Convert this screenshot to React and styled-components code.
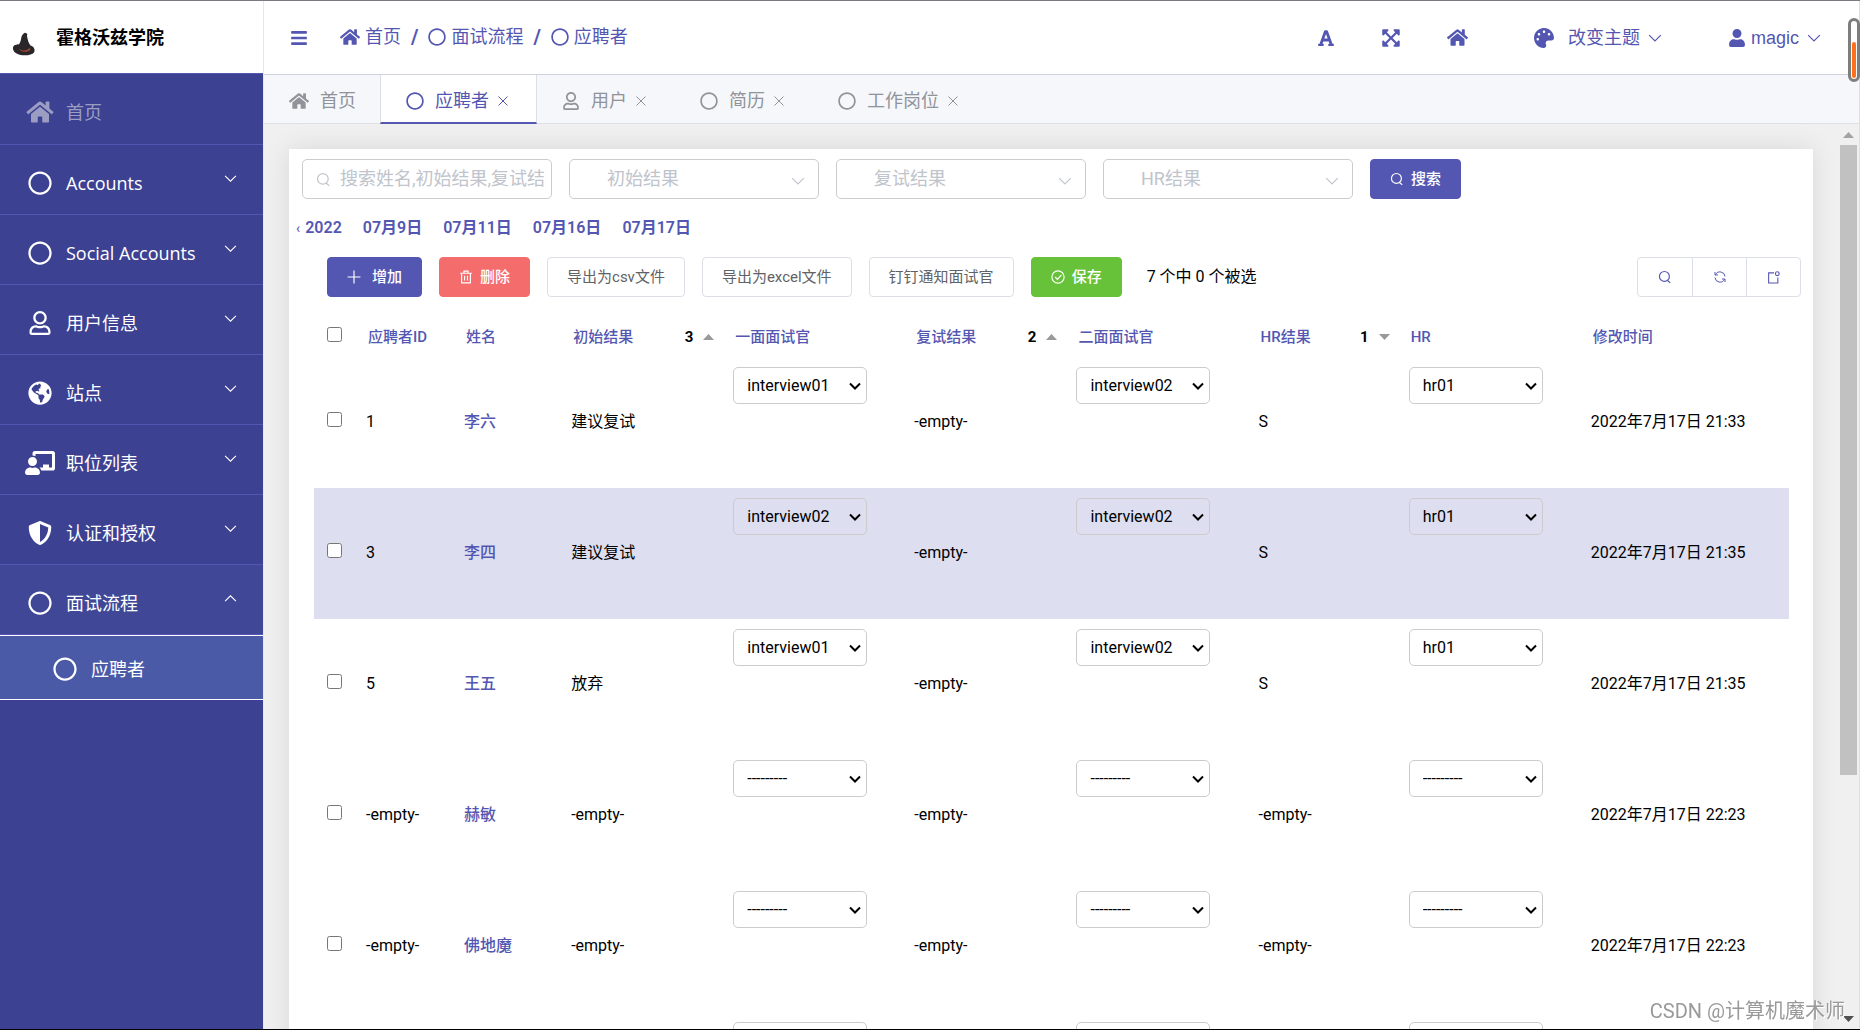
import React from 'react';
import styled, { createGlobalStyle, css } from 'styled-components';
import {
  FaBars, FaChalkboardTeacher, FaExpandArrowsAlt, FaFont, FaGlobeAmericas, FaHome,
  FaPalette, FaRegCircle, FaRegUser, FaShieldAlt, FaUser,
} from 'react-icons/fa';

const COLORS = {
  primary: '#5457b2',
  sidebar: '#3d4192',
  sidebarOpen: '#404797',
  sidebarActive: '#4b5aa7',
  danger: '#f56c6c',
  success: '#67c23a',
  border: '#dcdfe6',
  inputBorder: '#cccccc',
  muted: '#909399',
  placeholder: '#c0c4cc',
  text: '#606266',
  selectedRow: '#dddef0',
};

const CJK = '"Noto Sans CJK SC", sans-serif';

const MENU = [
  { label: '首页', icon: FaHome, home: true },
  { label: 'Accounts', icon: FaRegCircle },
  { label: 'Social Accounts', icon: FaRegCircle },
  { label: '用户信息', icon: FaRegUser },
  { label: '站点', icon: FaGlobeAmericas },
  { label: '职位列表', icon: FaChalkboardTeacher },
  { label: '认证和授权', icon: FaShieldAlt },
  { label: '面试流程', icon: FaRegCircle, children: [{ label: '应聘者', icon: FaRegCircle }] },
];

const TABS = [
  { label: '首页', icon: FaHome, fixed: true },
  { label: '应聘者', icon: FaRegCircle, active: true },
  { label: '用户', icon: FaRegUser },
  { label: '简历', icon: FaRegCircle },
  { label: '工作岗位', icon: FaRegCircle },
];

const DATES = ['07月9日', '07月11日', '07月16日', '07月17日'];

const COLUMNS = [
  { label: '应聘者ID', width: 98 },
  { label: '姓名', width: 107 },
  { label: '初始结果', width: 162, order: 3, dir: 'asc' },
  { label: '一面面试官', width: 181 },
  { label: '复试结果', width: 162, order: 2, dir: 'asc' },
  { label: '二面面试官', width: 182 },
  { label: 'HR结果', width: 150, order: 1, dir: 'desc' },
  { label: 'HR', width: 182 },
  { label: '修改时间', width: 208 },
];

const EMPTY = '-empty-';
const NONE = '---------';

const ROWS = [
  { id: '1', name: '李六', first: '建议复试', second: EMPTY, one: 'interview01', two: 'interview02', hrResult: 'S', hr: 'hr01', time: '2022年7月17日 21:33' },
  { id: '3', name: '李四', first: '建议复试', second: EMPTY, one: 'interview02', two: 'interview02', hrResult: 'S', hr: 'hr01', time: '2022年7月17日 21:35', selected: true },
  { id: '5', name: '王五', first: '放弃', second: EMPTY, one: 'interview01', two: 'interview02', hrResult: 'S', hr: 'hr01', time: '2022年7月17日 21:35' },
  { id: EMPTY, name: '赫敏', first: EMPTY, second: EMPTY, one: NONE, two: NONE, hrResult: EMPTY, hr: NONE, time: '2022年7月17日 22:23' },
  { id: EMPTY, name: '佛地魔', first: EMPTY, second: EMPTY, one: NONE, two: NONE, hrResult: EMPTY, hr: NONE, time: '2022年7月17日 22:23' },
  { one: '', two: '', hr: '' },
];

const INTERVIEWERS = [NONE, 'interview01', 'interview02'];
const HRS = [NONE, 'hr01'];

const PATHS = {
  search: 'M11 2.5a8.5 8.5 0 1 0 0 17a8.5 8.5 0 1 0 0 -17M16.5 18l4.5 4',
  down: 'M2 7l10 10L22 7',
  up: 'M2 17L12 7l10 10',
  close: 'M3 3l18 18M21 3L3 21',
  plus: 'M12 1v22M1 12h22',
  trash: 'M2 5.5h20M8.5 5V2h7v3M4.5 5.5V22h15V5.5M9.5 10v8M14.5 10v8',
  check: 'M12 1.5a10.5 10.5 0 1 0 0 21a10.5 10.5 0 1 0 0 -21M7 12l4 4l7 -7.5',
  refresh: 'M2 2v6h6M3 7.5A10 10 0 0 1 22 11M22 22v-6h-6M21 16.5A10 10 0 0 1 2 13',
  popup: 'M13 3.5H3V22h17V12M19 1.5a3.5 3.5 0 1 0 0 7a3.5 3.5 0 1 0 0 -7',
};

const LineIcon = ({ name, size = 14, weight = 2 }) => (
  <svg width={size} height={size} viewBox="0 0 24 24" fill="none" stroke="currentColor" strokeWidth={weight} aria-hidden="true">
    <path d={PATHS[name]} />
  </svg>
);

const Hat = () => (
  <svg width="24" height="24" viewBox="0 0 24 24" aria-hidden="true">
    <path d="M12.5 1C13.5 0.5 15 1.5 15.5 3C14.8 2.8 14.8 3.5 15.2 5C15.8 8 16.5 11 18.5 13.5C22 14.5 23.5 17.5 22 20.5C19.5 24 8 24.5 3 20.5C0 17.5 0.5 14 3 13C4.5 12.5 6 12.8 7.2 12C9.5 8.5 9 5 10 3.5C10.8 2.2 11.5 1.5 12.5 1Z" fill="#2b2629" />
    <path d="M6.5 16.5C10 19.5 15 19 18 15.5L18.2 18C15 20.8 9 20.5 6.5 16.5Z" fill="#9c4430" />
  </svg>
);

const SortArrow = ({ dir }) => (
  <svg width="11" height="6" viewBox="0 0 11 6" aria-hidden="true">
    <path d={dir === 'asc' ? 'M0 6L5.5 0L11 6Z' : 'M0 0L5.5 6L11 0Z'} fill="currentColor" />
  </svg>
);

const CellSelect = ({ label, value, options }) => (
  <SelectBox>
    <RowSelect aria-label={label} defaultValue={value}>
      {!value && <option value="" aria-label="未选择" />}
      {options.map((option) => <option key={option}>{option}</option>)}
    </RowSelect>
    <SelectArrow><LineIcon name="down" size={12} weight={4} /></SelectArrow>
  </SelectBox>
);

const Filter = ({ label }) => (
  <FilterBox>
    <FilterSelect aria-label={label} defaultValue="">
      <option value="">{label}</option>
    </FilterSelect>
    <FilterArrow><LineIcon name="down" size={14} /></FilterArrow>
  </FilterBox>
);

const Sidebar = () => (
  <Side>
    <Logo>
      <Hat />
      <LogoTitle>霍格沃兹学院</LogoTitle>
    </Logo>
    <Menu>
      {MENU.map(({ label, icon: Icon, home, children }) => (
        <React.Fragment key={label}>
          <MenuItem type="button" $home={home} $open={Boolean(children)}>
            <MenuIcon as={Icon} />
            <MenuLabel>{label}</MenuLabel>
            {!home && <MenuArrow><LineIcon name={children ? 'up' : 'down'} size={13} /></MenuArrow>}
          </MenuItem>
          {children && children.map((child) => (
            <SubItem key={child.label} href="#candidates">
              <MenuIcon as={child.icon} />
              <MenuLabel>{child.label}</MenuLabel>
            </SubItem>
          ))}
        </React.Fragment>
      ))}
    </Menu>
  </Side>
);

const Header = () => (
  <TopBar>
    <IconButton type="button" aria-label="菜单"><FaBars size={18} /></IconButton>
    <Breadcrumb>
      <Crumb href="#home"><FaHome size={20} />首页</Crumb>
      <Slash>/</Slash>
      <Crumb href="#flow"><FaRegCircle />面试流程</Crumb>
      <Slash>/</Slash>
      <Crumb href="#candidates"><FaRegCircle />应聘者</Crumb>
    </Breadcrumb>
    <TopTools>
      <IconButton type="button" aria-label="字体"><FaFont size={18} /></IconButton>
      <IconButton type="button" aria-label="全屏"><FaExpandArrowsAlt size={20} /></IconButton>
      <IconButton type="button" aria-label="首页"><FaHome size={21} /></IconButton>
    </TopTools>
    <DropButton type="button">
      <FaPalette size={20} />
      <DropLabel $gap={14}>改变主题</DropLabel>
      <LineIcon name="down" />
    </DropButton>
    <DropButton type="button">
      <FaUser size={18} />
      <DropLabel $gap={5}>magic</DropLabel>
      <LineIcon name="down" />
    </DropButton>
  </TopBar>
);

const Tabs = () => (
  <TabBar>
    {TABS.map(({ label, icon: Icon, active, fixed }) => (
      <Tab key={label} $active={active} $fixed={fixed}>
        <TabLink href={`#${label}`}>
          <Icon size={fixed ? 20 : 18} />
          {label}
        </TabLink>
        {!fixed && <CloseButton type="button" aria-label={`关闭${label}`}><LineIcon name="close" size={12} /></CloseButton>}
      </Tab>
    ))}
  </TabBar>
);

const ResultTable = () => (
  <Table>
    <colgroup>
      <Col $width={42} />
      {COLUMNS.map(({ label, width }) => <Col key={label} $width={width} />)}
    </colgroup>
    <thead>
      <tr>
        <CheckHead><Checkbox aria-label="全选" /></CheckHead>
        {COLUMNS.map(({ label, order, dir }) => (
          <HeadCell key={label}>
            <HeadContent>
              <HeadLink href={`#sort-${label}`}>{label}</HeadLink>
              {order && (
                <Sort>
                  {order}
                  <SortIcon><SortArrow dir={dir} /></SortIcon>
                </Sort>
              )}
            </HeadContent>
          </HeadCell>
        ))}
      </tr>
    </thead>
    <tbody>
      {ROWS.map((row, index) => (
        <Row key={`row${index + 1}`} $selected={row.selected}>
          <CheckCell><Checkbox aria-label={row.name || '选择'} /></CheckCell>
          <Cell>{row.id}</Cell>
          <Cell><NameLink href="#candidate">{row.name}</NameLink></Cell>
          <Cell>{row.first}</Cell>
          <Cell $top><CellSelect label="一面面试官" value={row.one} options={INTERVIEWERS} /></Cell>
          <Cell>{row.second}</Cell>
          <Cell $top><CellSelect label="二面面试官" value={row.two} options={INTERVIEWERS} /></Cell>
          <Cell>{row.hrResult}</Cell>
          <Cell $top><CellSelect label="HR" value={row.hr} options={HRS} /></Cell>
          <Cell>{row.time}</Cell>
        </Row>
      ))}
    </tbody>
  </Table>
);

const App = () => (
  <Shell>
    <GlobalStyle />
    <Sidebar />
    <Main>
      <Header />
      <Tabs />
      <Content>
        <ScrollArea>
          <Card>
            <Filters>
              <SearchBox>
                <LineIcon name="search" size={15} />
                <SearchInput aria-label="搜索" placeholder="搜索姓名,初始结果,复试结果" />
              </SearchBox>
              <Filter label="初始结果" />
              <Filter label="复试结果" />
              <Filter label="HR结果" />
              <Button type="button" $tone="primary">
                <LineIcon name="search" />
                搜索
              </Button>
            </Filters>
            <DateNav>
              <DateLink href="#year"><Back>‹</Back>2022</DateLink>
              {DATES.map((date) => <DateLink key={date} href={`#${date}`}>{date}</DateLink>)}
            </DateNav>
            <Toolbar>
              <Button type="button" $tone="primary" $wide>
                <LineIcon name="plus" />
                增加
              </Button>
              <Button type="button" $tone="danger">
                <LineIcon name="trash" />
                删除
              </Button>
              <Button type="button">导出为csv文件</Button>
              <Button type="button">导出为excel文件</Button>
              <Button type="button">钉钉通知面试官</Button>
              <Button type="button" $tone="success">
                <LineIcon name="check" />
                保存
              </Button>
              <Counter>7 个中 0 个被选</Counter>
              <ButtonGroup>
                <GroupButton type="button" aria-label="搜索"><LineIcon name="search" /></GroupButton>
                <GroupButton type="button" aria-label="刷新"><LineIcon name="refresh" size={12} /></GroupButton>
                <GroupButton type="button" aria-label="新窗口"><LineIcon name="popup" size={13} /></GroupButton>
              </ButtonGroup>
            </Toolbar>
            <ResultTable />
          </Card>
        </ScrollArea>
        <ScrollTrack>
          <ScrollEnd><SortArrow dir="asc" /></ScrollEnd>
          <ScrollRail><ScrollThumb /></ScrollRail>
          <ScrollEnd $enabled><SortArrow dir="desc" /></ScrollEnd>
        </ScrollTrack>
      </Content>
    </Main>
    <Gauge><GaugeLevel /></Gauge>
    <Watermark>CSDN @计算机魔术师</Watermark>
  </Shell>
);

const GlobalStyle = createGlobalStyle`
  * {
    box-sizing: border-box;
  }

  body {
    margin: 0;
    font-family: Roboto, ${CJK};
    font-size: 16px;
    line-height: 20px;
    color: #000000;
    background: #f0f0f0;
  }

  a {
    color: inherit;
    text-decoration: none;
  }

  button, input, select {
    font: inherit;
    color: inherit;
  }

  svg {
    flex: none;
  }
`;

const plainButton = css`
  padding: 0;
  border: 0;
  background: transparent;
  cursor: pointer;
`;

const Shell = styled.div`
  display: flex;
  height: 100vh;
  overflow: hidden;
  border-top: 1px solid #7c7a80;
  border-bottom: 1px solid #000000;
`;

const Side = styled.aside`
  flex: none;
  width: 263px;
  background: ${COLORS.sidebar};
`;

const Logo = styled.div`
  display: flex;
  align-items: center;
  gap: 20px;
  height: 72px;
  padding-left: 12px;
  background: #ffffff;

  svg {
    margin-top: 14px;
  }
`;

const LogoTitle = styled.strong`
  padding-bottom: 2px;
  font-family: ${CJK};
  font-size: 18px;
  font-weight: 700;
`;

const Menu = styled.nav`
  padding-top: 1px;
  border-top: 1px solid ${COLORS.primary};
`;

const MenuItem = styled.button`
  ${plainButton}
  display: flex;
  align-items: center;
  gap: 11px;
  width: 100%;
  height: 70px;
  padding: ${({ $home }) => ($home ? '4px' : '6px')} 26px 0 25px;
  border-bottom: 1px solid ${COLORS.primary};
  font-family: "Open Sans", ${CJK};
  font-size: 18px;
  color: ${({ $home }) => ($home ? '#9b9ec2' : '#ffffff')};
  background: ${({ $open }) => ($open ? COLORS.sidebarOpen : 'transparent')};
`;

const MenuIcon = styled.svg`
  width: 30px;
  height: 24px;
`;

const MenuLabel = styled.span`
  line-height: 24px;
`;

const MenuArrow = styled.span`
  display: flex;
  margin: 0 0 8px auto;
`;

const SubItem = styled.a`
  display: flex;
  align-items: center;
  gap: 11px;
  height: 65px;
  padding: 2px 0 0 50px;
  border-top: 1px solid #ffffff;
  border-bottom: 1px solid #ffffff;
  font-family: "Open Sans", ${CJK};
  font-size: 18px;
  color: #ffffff;
  background: ${COLORS.sidebarActive};
`;

const Main = styled.main`
  display: flex;
  flex: 1;
  flex-direction: column;
  min-width: 0;
  border-left: 1px solid #e6e6ec;
  border-right: 1px solid ${COLORS.border};
`;

const TopBar = styled.header`
  display: flex;
  flex: none;
  align-items: center;
  height: 74px;
  padding: 0 38px 0 26px;
  border-bottom: 1px solid #d0d3de;
  font-family: "Liberation Sans", ${CJK};
  font-size: 18px;
  color: ${COLORS.primary};
  background: #ffffff;
`;

const IconButton = styled.button`
  ${plainButton}
  display: flex;
`;

const Breadcrumb = styled.nav`
  display: flex;
  align-items: center;
  margin-left: 32px;
  padding-bottom: 2px;
`;

const Crumb = styled.a`
  display: flex;
  align-items: center;
  gap: 5px;
`;

const Slash = styled.span`
  margin: 0 10px;
  font-family: Roboto, sans-serif;
  font-size: 20px;
  font-weight: 700;
`;

const TopTools = styled.div`
  display: flex;
  align-items: center;
  gap: 46px;
  margin-left: auto;
`;

const DropButton = styled.button`
  ${plainButton}
  display: flex;
  align-items: center;
  margin-left: 66px;
`;

const DropLabel = styled.span`
  padding: 0 8px 0 ${({ $gap }) => $gap}px;
`;

const TabBar = styled.nav`
  display: flex;
  flex: none;
  height: 49px;
  background: #f5f7fb;
  box-shadow: inset 0 -1px ${COLORS.border};
`;

const Tab = styled.div`
  display: flex;
  align-items: center;
  gap: 8px;
  padding: 2px ${({ $fixed }) => ($fixed ? 24 : 28)}px 0 25px;
  font-size: 18px;
  color: ${COLORS.muted};

  ${({ $active }) => $active && css`
    padding: 4px 27px 0 25px;
    color: ${COLORS.primary};
    background: #ffffff;
    border: solid ${COLORS.border};
    border-width: 0 1px;
    border-bottom: 2px solid ${COLORS.primary};
  `}
`;

const TabLink = styled.a`
  display: flex;
  align-items: center;
  gap: 11px;
`;

const CloseButton = styled.button`
  ${plainButton}
  display: flex;
`;

const Content = styled.div`
  display: flex;
  flex: 1;
  min-height: 0;
  background: #f0f0f0;
`;

const ScrollArea = styled.div`
  flex: 1;
  min-width: 0;
  padding: 25px 27px 0 25px;
  overflow: hidden;
`;

const Card = styled.section`
  padding: 10px 12px 20px 13px;
  background: #ffffff;
  box-shadow: 0 0 25px rgba(0, 0, 0, 0.1);
`;

const Filters = styled.div`
  display: flex;
  gap: 17px;
  color: ${COLORS.placeholder};
`;

const SearchBox = styled.label`
  display: flex;
  align-items: center;
  gap: 9px;
  width: 250px;
  height: 40px;
  padding: 0 7px 0 13px;
  border: 1px solid ${COLORS.inputBorder};
  border-radius: 5px;
`;

const SearchInput = styled.input`
  flex: 1;
  min-width: 0;
  padding: 0;
  border: 0;
  outline: 0;
  font-size: 18px;
  background: transparent;

  &::placeholder {
    color: ${COLORS.placeholder};
  }
`;

const FilterBox = styled.div`
  position: relative;
  width: 250px;
`;

const FilterSelect = styled.select`
  width: 100%;
  height: 40px;
  padding: 0 37px;
  border: 1px solid ${COLORS.inputBorder};
  border-radius: 5px;
  font-size: 18px;
  background: #ffffff;
  appearance: none;
`;

const FilterArrow = styled.span`
  position: absolute;
  top: 15px;
  right: 14px;
  display: flex;
  pointer-events: none;
`;

const TONES = {
  primary: COLORS.primary,
  danger: COLORS.danger,
  success: COLORS.success,
};

const Button = styled.button`
  display: flex;
  align-items: center;
  gap: ${({ $wide }) => ($wide ? 11 : 7)}px;
  height: 40px;
  padding: 0 19px;
  border: 1px solid ${({ $tone }) => TONES[$tone] || COLORS.border};
  border-radius: 4px;
  font-size: 15px;
  font-weight: ${({ $tone }) => ($tone ? 500 : 400)};
  color: ${({ $tone }) => ($tone ? '#ffffff' : COLORS.text)};
  background: ${({ $tone }) => TONES[$tone] || '#ffffff'};
  cursor: pointer;
`;

const DateNav = styled.nav`
  display: flex;
  align-items: center;
  gap: 21px;
  height: 58px;
  margin-left: -6px;
`;

const DateLink = styled.a`
  display: flex;
  align-items: center;
  gap: 5px;
  font-weight: 600;
  color: ${COLORS.primary};
`;

const Back = styled.span`
  font-size: 14px;
  font-weight: 400;
`;

const Toolbar = styled.div`
  display: flex;
  align-items: center;
  gap: 17px;
  margin-left: 25px;
`;

const Counter = styled.span`
  margin-left: 8px;
`;

const ButtonGroup = styled.div`
  display: flex;
  margin-left: auto;
  border: 1px solid ${COLORS.border};
  border-radius: 4px;
`;

const GroupButton = styled.button`
  ${plainButton}
  display: flex;
  align-items: center;
  justify-content: center;
  width: 54px;
  height: 38px;
  color: ${COLORS.primary};

  & + & {
    border-left: 1px solid ${COLORS.border};
  }
`;

const Table = styled.table`
  width: calc(100% - 24px);
  margin: 20px 12px 0;
  table-layout: fixed;
  border-collapse: collapse;
`;

const Col = styled.col`
  width: ${({ $width }) => $width}px;
`;

const HeadCell = styled.th`
  height: 40px;
  padding: 0 9px 0 12px;
  font-size: 15px;
  font-weight: 500;
  text-align: left;
`;

const HeadContent = styled.div`
  display: flex;
  align-items: center;
  justify-content: space-between;
`;

const HeadLink = styled.a`
  color: ${COLORS.primary};
`;

const Sort = styled.span`
  display: flex;
  align-items: center;
  gap: 10px;
  font-weight: 700;
`;

const SortIcon = styled.span`
  display: flex;
  color: #999999;
`;

const Row = styled.tr`
  height: 131px;
  background: ${({ $selected }) => ($selected ? COLORS.selectedRow : 'transparent')};
`;

const Cell = styled.td`
  padding: ${({ $top }) => ($top ? '10px' : '0 0 2px 10px')};
  vertical-align: ${({ $top }) => ($top ? 'top' : 'middle')};
  white-space: nowrap;
`;

const CheckCell = styled.td`
  padding: 0 0 6px 13px;
`;

const CheckHead = styled.th`
  padding: 0 0 6px 13px;
  text-align: left;
`;

const Checkbox = styled.input.attrs({ type: 'checkbox' })`
  display: block;
  width: 15px;
  height: 15px;
  margin: 0;
`;

const NameLink = styled.a`
  font-weight: 500;
  color: ${COLORS.primary};
`;

const SelectBox = styled.div`
  position: relative;
  width: 134px;
`;

const RowSelect = styled.select`
  display: block;
  width: 100%;
  height: 37px;
  padding: 0 24px 0 13px;
  border: 1px solid ${COLORS.inputBorder};
  border-radius: 5px;
  background: transparent;
  appearance: none;
`;

const SelectArrow = styled.span`
  position: absolute;
  top: 13px;
  right: 6px;
  display: flex;
  pointer-events: none;
`;

const ScrollTrack = styled.div`
  display: flex;
  flex-direction: column;
  width: 19px;
  padding-right: 2px;
`;

const ScrollEnd = styled.div`
  display: flex;
  align-items: center;
  justify-content: center;
  height: 21px;
  color: ${({ $enabled }) => ($enabled ? '#505050' : '#a3a3a3')};
`;

const ScrollRail = styled.div`
  flex: 1;
`;

const ScrollThumb = styled.div`
  height: 73%;
  background: #c1c1c1;
`;

const Gauge = styled.div`
  position: fixed;
  top: 18px;
  right: 0;
  display: flex;
  align-items: flex-end;
  width: 12px;
  height: 64px;
  padding: 1px;
  border: 3px solid #7d7d7d;
  border-radius: 6px;
  background: #ffffff;
`;

const GaugeLevel = styled.div`
  width: 100%;
  height: 65%;
  border-radius: 2px;
  background: #ff6f1e;
`;

const Watermark = styled.div`
  position: fixed;
  right: 15px;
  bottom: 9px;
  font-size: 20px;
  color: #999999;
  text-shadow: 1px 1px #ffffff;
`;

export default App;
